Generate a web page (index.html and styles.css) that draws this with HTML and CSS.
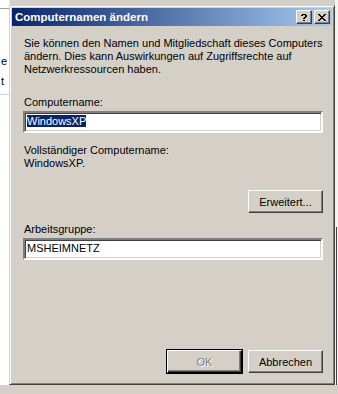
FILE: index.html
```html
<!DOCTYPE html>
<html lang="de">
<head>
    <meta charset="UTF-8">
    <title>Computernamen ändern</title>
    <link rel="stylesheet" href="styles.css">
</head>
<body>
    <div class="desktop">
        <!-- Fenster im Hintergrund, nur die Ränder sind sichtbar -->
        <div class="behind-left">
            <span class="frag frag-e">e</span>
            <span class="frag frag-t">t</span>
            <div class="rule rule-1"></div>
            <div class="rule rule-2"></div>
        </div>
        <div class="behind-right">
            <div class="edge-line"></div>
        </div>

        <div class="dialog">
            <div class="titlebar">
                <span class="title">Computernamen ändern</span>
                <div class="caption-buttons">
                    <button class="cap-btn">
                        <svg width="6" height="7" viewBox="0 0 6 7" shape-rendering="crispEdges">
                            <path d="M1 0h4v1H1z M0 1h2v1H0z M4 1h2v1H4z M4 2h2v1H4z M3 3h2v1H3z M2 4h2v1H2z M2 6h2v1H2z" fill="#000"/>
                        </svg>
                    </button>
                    <button class="cap-btn">
                        <svg width="8" height="7" viewBox="0 0 8 7" shape-rendering="crispEdges">
                            <path d="M0 0h2v1H0z M6 0h2v1H6z M1 1h2v1H1z M5 1h2v1H5z M2 2h4v1H2z M3 3h2v1H3z M2 4h4v1H2z M1 5h2v1H1z M5 5h2v1H5z M0 6h2v1H0z M6 6h2v1H6z" fill="#000"/>
                        </svg>
                    </button>
                </div>
            </div>

            <div class="dialog-body">
                <p class="intro">Sie können den Namen und Mitgliedschaft dieses Computers<br>ändern. Dies kann Auswirkungen auf Zugriffsrechte auf<br>Netzwerkressourcen haben.</p>

                <label class="field-label label-name">Computername:</label>
                <div class="textbox"><span class="selected">WindowsXP</span></div>

                <p class="full-name">Vollständiger Computername:<br>WindowsXP.</p>

                <div class="row-right">
                    <button class="btn">Erweitert...</button>
                </div>

                <label class="field-label label-group">Arbeitsgruppe:</label>
                <div class="textbox">MSHEIMNETZ</div>

                <div class="footer">
                    <button class="btn btn-default" disabled>OK</button>
                    <button class="btn">Abbrechen</button>
                </div>
            </div>
        </div>
    </div>
</body>
</html>
```

FILE: styles.css
```css
body {
    margin: 0;
    font-family: "Liberation Sans", Arial, sans-serif;
    font-size: 11px;
    color: #000;
}
.desktop {
    position: relative;
    width: 338px;
    height: 394px;
    overflow: hidden;
    background-color: #d4d0c8;
}
.behind-left {
    position: absolute;
    left: 0;
    top: 0;
    width: 9px;
    height: 385px;
    background-color: #fff;
    border-right: 1px solid #f0eeea;
    overflow: hidden;
}
.frag {
    position: absolute;
    font-size: 11px;
    line-height: 11px;
}
.frag-e {
    left: 1px;
    top: 56px;
}
.frag-t {
    left: 1px;
    top: 76px;
}
.rule {
    position: absolute;
    left: 0;
    width: 9px;
    height: 1px;
    background-color: #a0a0a0;
}
.rule-1 {
    top: 8px;
}
.rule-2 {
    top: 94px;
    background-color: #d0d0d0;
}
.behind-right {
    position: absolute;
    right: 0;
    top: 0;
    width: 3px;
    height: 385px;
    background-color: #f4f3f0;
}
.edge-line {
    position: absolute;
    left: 1px;
    top: 227px;
    width: 1px;
    height: 158px;
    background-color: #404040;
}

.dialog {
    position: absolute;
    left: 9px;
    top: 5px;
    width: 326px;
    height: 380px;
    box-sizing: border-box;
    padding: 2px;
    background-color: #d4d0c8;
    border: 1px solid;
    border-color: #d4d0c8 #404040 #404040 #d4d0c8;
    box-shadow: inset 1px 1px #fff, inset -1px -1px #808080;
    display: flex;
    flex-direction: column;
}
.titlebar {
    height: 18px;
    display: flex;
    align-items: center;
    justify-content: space-between;
    padding: 0 2px 0 3px;
    background: linear-gradient(to right, #0a246a, #a6caf0);
    color: #fff;
}
.title {
    font-weight: bold;
    font-size: 11.5px;
    line-height: 14px;
}
.caption-buttons {
    display: flex;
    gap: 2px;
}
.cap-btn {
    width: 16px;
    height: 14px;
    padding: 0;
    margin: 0;
    box-sizing: border-box;
    display: flex;
    align-items: center;
    justify-content: center;
    background-color: #d4d0c8;
    border: 1px solid;
    border-color: #fff #404040 #404040 #fff;
    box-shadow: inset -1px -1px #808080;
}

.dialog-body {
    flex: 1;
    display: flex;
    flex-direction: column;
    padding: 11px 9px 9px 11px;
}
.intro,
.full-name,
.field-label {
    margin: 0 0 0 1px;
    line-height: 13px;
}
.label-name {
    margin-top: 20px;
}
.label-group {
    margin-top: 10px;
}
.full-name {
    margin-top: 11px;
}
.textbox {
    margin-top: 2px;
    height: 22px;
    box-sizing: border-box;
    padding: 1px 2px;
    line-height: 14px;
    background-color: #fff;
    border: 2px solid;
    border-color: #808080 #fff #fff #808080;
    box-shadow: inset 1px 1px #404040, inset -1px -1px #d4d0c8;
}
.selected {
    background-color: #0a246a;
    color: #fff;
}
.row-right {
    display: flex;
    justify-content: flex-end;
    margin-top: 20px;
}
.btn {
    width: 75px;
    height: 23px;
    padding: 0;
    box-sizing: border-box;
    font-family: inherit;
    font-size: 11px;
    color: #000;
    background-color: #d4d0c8;
    border: 1px solid;
    border-color: #fff #404040 #404040 #fff;
    box-shadow: inset -1px -1px #808080;
}
.btn-default {
    outline: 1px solid #000;
    outline-offset: 0;
    border-color: #fff #000 #000 #fff;
    box-shadow: inset -1px -1px #404040, inset -2px -2px #808080;
}
.btn:disabled {
    color: #808080;
    text-shadow: 1px 1px #fff;
}
.footer {
    margin-top: auto;
    display: flex;
    justify-content: flex-end;
    gap: 6px;
}
```
